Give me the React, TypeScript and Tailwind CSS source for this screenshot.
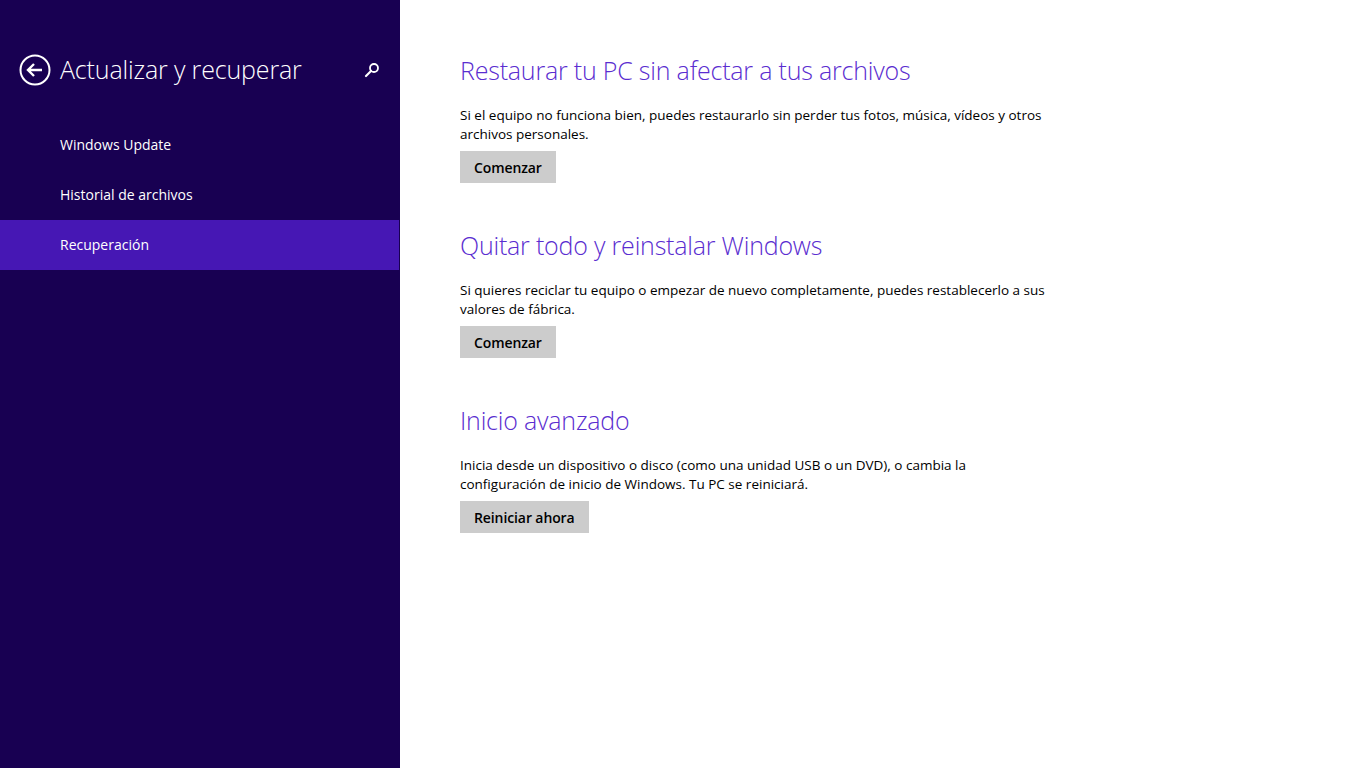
import React from "react";

const navItems = ["Windows Update", "Historial de archivos", "Recuperación"];

const sections = [
  {
    title: "Restaurar tu PC sin afectar a tus archivos",
    text: "Si el equipo no funciona bien, puedes restaurarlo sin perder tus fotos, música, vídeos y otros archivos personales.",
    button: "Comenzar",
  },
  {
    title: "Quitar todo y reinstalar Windows",
    text: "Si quieres reciclar tu equipo o empezar de nuevo completamente, puedes restablecerlo a sus valores de fábrica.",
    button: "Comenzar",
  },
  {
    title: "Inicio avanzado",
    text: "Inicia desde un dispositivo o disco (como una unidad USB o un DVD), o cambia la configuración de inicio de Windows. Tu PC se reiniciará.",
    button: "Reiniciar ahora",
  },
];

function BackIcon() {
  return (
    <svg width="32" height="32" viewBox="0 0 32 32" fill="none" stroke="white">
      <circle cx="16" cy="16" r="14.5" strokeWidth="2" />
      <path d="M9 16h14M15 10l-6 6 6 6" strokeWidth="2.4" />
    </svg>
  );
}

function SearchIcon() {
  return (
    <svg width="16" height="16" viewBox="0 0 16 16" fill="none" stroke="white">
      <circle cx="10" cy="6" r="4" strokeWidth="1.8" />
      <path d="M7 9l-5 5" strokeWidth="2.2" strokeLinecap="round" />
    </svg>
  );
}

export default function App(): React.ReactElement {
  return (
    <div className="flex w-[1366px] h-[768px] bg-white font-['Open_Sans',sans-serif] overflow-hidden">
      <aside className="w-[400px] shrink-0 bg-[#180052] text-white">
        <div className="flex items-center h-[60px] mt-[40px] pl-[19px] pr-[20px]">
          <BackIcon />
          <h1 className="ml-[9px] text-[25px] font-light tracking-[-0.15px] flex-1">Actualizar y recuperar</h1>
          <SearchIcon />
        </div>
        <nav className="mt-[20px]">
          {navItems.map((item) => (
            <div
              key={item}
              className={`h-[50px] flex items-center pl-[60px] pb-[2px] text-[14px] ${
                item === "Recuperación" ? "bg-[#4617b4] w-[399px]" : ""
              }`}
            >
              {item}
            </div>
          ))}
        </nav>
      </aside>
      <main className="flex-1 pl-[60px] pt-[52px]">
        {sections.map((s) => (
          <section key={s.title} className="h-[175px]">
            <h2 className="text-[25px] font-light text-[#5a2dd0] leading-[36px] tracking-[-0.2px]">{s.title}</h2>
            <p className="mt-[18px] w-[590px] text-[13.5px] leading-[19px] text-black">{s.text}</p>
            <button className="mt-[7px] h-[32px] px-[14px] bg-[#cccccc] text-[14px] font-semibold text-black tracking-[-0.1px]">
              {s.button}
            </button>
          </section>
        ))}
      </main>
    </div>
  );
}
